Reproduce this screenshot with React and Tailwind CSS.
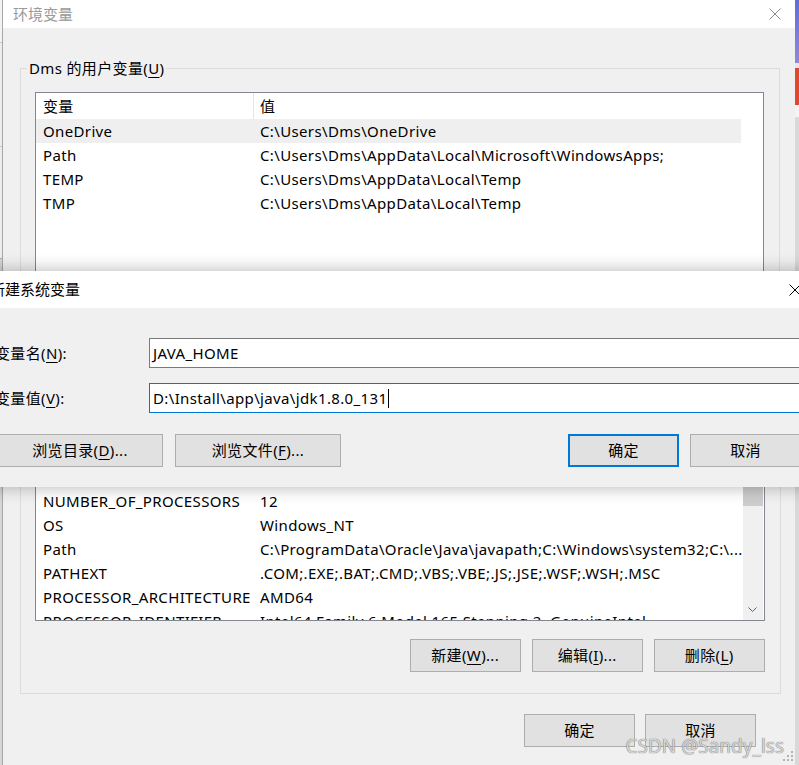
import React from 'react';

const font = "font-['Noto_Sans','Noto_Sans_CJK_SC',sans-serif]";

const userVars = [
  ['OneDrive', 'C:\\Users\\Dms\\OneDrive'],
  ['Path', 'C:\\Users\\Dms\\AppData\\Local\\Microsoft\\WindowsApps;'],
  ['TEMP', 'C:\\Users\\Dms\\AppData\\Local\\Temp'],
  ['TMP', 'C:\\Users\\Dms\\AppData\\Local\\Temp'],
];

const sysVars = [
  ['ComSpec', 'C:\\Windows\\system32\\cmd.exe'],
  ['DriverData', 'C:\\Windows\\System32\\Drivers\\DriverData'],
  ['NUMBER_OF_PROCESSORS', '12'],
  ['OS', 'Windows_NT'],
  ['Path', 'C:\\ProgramData\\Oracle\\Java\\javapath;C:\\Windows\\system32;C:\\...'],
  ['PATHEXT', '.COM;.EXE;.BAT;.CMD;.VBS;.VBE;.JS;.JSE;.WSF;.WSH;.MSC'],
  ['PROCESSOR_ARCHITECTURE', 'AMD64'],
  ['PROCESSOR_IDENTIFIER', 'Intel64 Family 6 Model 165 Stepping 2, GenuineIntel'],
  ['PROCESSOR_LEVEL', '6'],
];

const Key = ({ children }) => <span className="underline underline-offset-[3px] decoration-1">{children}</span>;

const Btn = ({ children, primary, className = '' }) => (
  <div
    className={`w-[111px] h-[33px] shrink-0 flex items-center justify-center bg-[#e1e1e1] leading-none ${
      primary ? 'border-2 border-[#0078d7]' : 'border border-[#adadad]'
    } ${className}`}
  >
    {children}
  </div>
);

const Row = ({ name, value, hl }) => (
  <div className={`h-[24px] flex leading-[24px] whitespace-nowrap ${hl ? 'bg-[#efefef]' : ''}`}>
    <div className="w-[218px] shrink-0 pl-[7px] overflow-hidden">{name}</div>
    <div className="flex-1 pl-[6px] overflow-hidden">{value}</div>
  </div>
);

const Header = () => (
  <div className="h-[26px] flex leading-[26px] bg-white">
    <div className="w-[218px] shrink-0 pl-[7px] border-r border-[#e5e5e5]">变量</div>
    <div className="flex-1 pl-[6px]">值</div>
  </div>
);

const CloseX = ({ color }) => (
  <svg width="12" height="12" viewBox="0 0 12 12">
    <path d="M0.5 0.5L11.5 11.5M11.5 0.5L0.5 11.5" stroke={color} strokeWidth="1" fill="none" />
  </svg>
);

export default function App() {
  return (
    <div className={`relative w-[799px] h-[765px] overflow-hidden flex bg-[#e6e6e6] text-[15px] tracking-[0.36px] text-black ${font}`}>
      {/* window behind, left edge */}
      <div className="w-[2px] shrink-0 flex flex-col bg-[#ececec]">
        <div className="h-[43px] bg-[#f2f2f2] border-b border-[#c8c8c8]" />
        <div className="h-[104px] border-b border-[#c8c8c8]" />
        <div className="h-[112px] border-b border-[#b0b0b0]" />
        <div className="flex-1 bg-[#d6d6d6]" />
      </div>

      {/* 环境变量 dialog */}
      <div className="relative w-[793px] shrink-0 border-l border-[#a8a8a8] flex flex-col bg-[#f0f0f0]">
        <div className="h-[28px] shrink-0 bg-white flex items-center justify-between pl-[10px] pr-[14px]">
          <span className="text-[#9a9a9a] leading-none tracking-normal">环境变量</span>
          <CloseX color="#8c8c8c" />
        </div>

        <div className="flex-1 flex flex-col pl-[17px] pr-[15px] pt-[30px]">
          <fieldset className="border border-[#dcdcdc] pl-[14px] pr-[15px] pb-[21px]">
            <legend className="-ml-[8px] px-[2px] leading-[20px]">
              Dms 的用户变量(<Key>U</Key>)
            </legend>
            <div className="mt-[14px] h-[200px] border border-[#828790] bg-white">
              <div className="w-[705px]">
                <Header />
                {userVars.map(([n, v], i) => (
                  <Row key={n} name={n} value={v} hl={i === 0} />
                ))}
              </div>
            </div>
            <div className="mt-[19px] flex justify-end gap-[11px]">
              <Btn>新建(<Key>N</Key>)...</Btn>
              <Btn>编辑(<Key>E</Key>)...</Btn>
              <Btn>删除(<Key>D</Key>)</Btn>
            </div>
          </fieldset>

          <fieldset className="mt-[14px] border border-[#dcdcdc] pl-[14px] pr-[15px] pb-[21px]">
            <legend className="-ml-[8px] px-[2px] leading-[20px]">
              系统变量(<Key>S</Key>)
            </legend>
            <div className="mt-[14px] h-[207px] border border-[#828790] bg-white flex">
              <div className="flex-1 overflow-hidden">
                <Header />
                {sysVars.map(([n, v]) => (
                  <Row key={n} name={n} value={v} />
                ))}
              </div>
              <div className="w-[20px] mr-[1px] shrink-0 bg-[#f0f0f0] flex flex-col">
                <div className="h-[20px] flex items-center justify-center">
                  <svg width="9" height="6" viewBox="0 0 9 6">
                    <path d="M0.5 5.5L4.5 1.5L8.5 5.5" stroke="#606060" fill="none" />
                  </svg>
                </div>
                <div className="flex-1">
                  <div className="mt-[35px] h-[36px] bg-[#cdcdcd]" />
                </div>
                <div className="h-[20px] flex items-center justify-center">
                  <svg width="9" height="6" viewBox="0 0 9 6">
                    <path d="M0.5 0.5L4.5 4.5L8.5 0.5" stroke="#606060" fill="none" />
                  </svg>
                </div>
              </div>
            </div>
            <div className="mt-[18px] flex justify-end gap-[11px]">
              <Btn>新建(<Key>W</Key>)...</Btn>
              <Btn>编辑(<Key>I</Key>)...</Btn>
              <Btn>删除(<Key>L</Key>)</Btn>
            </div>
          </fieldset>

          <div className="mt-[20px] flex justify-end gap-[10px] pr-[24px]">
            <Btn>确定</Btn>
            <Btn>取消</Btn>
          </div>
        </div>

        {/* resize grip */}
        <svg className="absolute right-[1px] bottom-[3px]" width="11" height="11" viewBox="0 0 11 11">
          <g fill="#b4b4b4">
            <rect x="8" y="0" width="2" height="2" />
            <rect x="4" y="4" width="2" height="2" />
            <rect x="8" y="4" width="2" height="2" />
            <rect x="0" y="8" width="2" height="2" />
            <rect x="4" y="8" width="2" height="2" />
            <rect x="8" y="8" width="2" height="2" />
          </g>
        </svg>
      </div>

      {/* desktop behind, right edge */}
      <div className="w-[4px] shrink-0 flex flex-col">
        <div className="h-[63px] bg-gradient-to-b from-[#5a6fd8] to-[#9487d6]" />
        <div className="h-[5px] bg-[#e9e4f0]" />
        <div className="h-[37px] bg-[#e2472b]" />
        <div className="h-[12px] bg-[#f4f4f4]" />
        <div className="flex-1 bg-[#d9d9d9]" />
      </div>

      {/* 新建系统变量 dialog */}
      <div className="absolute left-[-20px] top-[271px] w-[838px] h-[216px] flex flex-col bg-[#f0f0f0] shadow-[0_0_16px_rgba(0,0,0,0.3)]">
        <div className="h-[37px] shrink-0 bg-white flex items-center justify-between pl-[10px] pr-[17px]">
          <span className="leading-none tracking-normal">新建系统变量</span>
          <CloseX color="#000" />
        </div>
        <div className="flex-1 px-[15px] pt-[30px]">
          <div className="flex items-center">
            <div className="w-[154px] shrink-0">
              变量名(<Key>N</Key>):
            </div>
            <div className="flex-1 h-[30px] border border-[#7a7a7a] bg-white px-[3px] flex items-center">
              JAVA_HOME
            </div>
          </div>
          <div className="mt-[15px] flex items-center">
            <div className="w-[154px] shrink-0">
              变量值(<Key>V</Key>):
            </div>
            <div className="flex-1 h-[30px] border border-[#0078d7] bg-white px-[3px] flex items-center">
              D:\Install\app\java\jdk1.8.0_131
              <span className="ml-[1px] w-px h-[19px] bg-black" />
            </div>
          </div>
          <div className="mt-[21px] flex">
            <Btn className="ml-[2px] w-[166px]">浏览目录(<Key>D</Key>)...</Btn>
            <Btn className="ml-[12px] w-[166px]">浏览文件(<Key>F</Key>)...</Btn>
            <div className="ml-auto mr-[2px] flex gap-[11px]">
              <Btn primary>确定</Btn>
              <Btn>取消</Btn>
            </div>
          </div>
        </div>
      </div>

      {/* watermark */}
      <div className="absolute right-[15px] bottom-[9px] text-[19px] tracking-normal leading-none text-[#d4d4d4] [text-shadow:0_0_1px_rgba(0,0,0,0.7)]">
        CSDN @Sandy_lss
      </div>
    </div>
  );
}
